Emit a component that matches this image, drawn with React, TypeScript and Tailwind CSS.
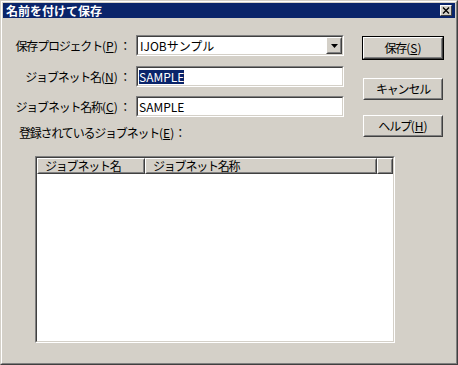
import React from 'react';

const sunkenOuter = 'border border-t-[#808080] border-l-[#808080] border-r-white border-b-white';
const sunkenInner = 'border border-t-[#404040] border-l-[#404040] border-r-[#d4d0c8] border-b-[#d4d0c8]';
const raisedOuter = 'border border-t-white border-l-white border-r-[#404040] border-b-[#404040]';
const raisedInner = 'border border-t-[#d4d0c8] border-l-[#d4d0c8] border-r-[#808080] border-b-[#808080]';

function Key({ k }: { k: string }) {
  return <span className="tracking-normal">(<span className="underline">{k}</span>)</span>;
}

function Field({ children }: { children: React.ReactNode }) {
  return (
    <div className={`w-[208px] h-[21px] ${sunkenOuter}`}>
      <div className={`h-full bg-white flex items-center pl-px tracking-normal ${sunkenInner}`}>{children}</div>
    </div>
  );
}

function Label({ text, keyChar }: { text: string; keyChar: string }) {
  return (
    <div className="w-[133px] pr-[6px] text-right whitespace-nowrap">
      {text}<Key k={keyChar} /> ：
    </div>
  );
}

function Button({ label, keyChar, isDefault = false, className = '' }: {
  label: string; keyChar?: string; isDefault?: boolean; className?: string;
}) {
  const body = (
    <div className={`h-full ${raisedOuter}`}>
      <div className={`h-full flex items-center justify-center ${raisedInner}`}>
        {label}
        {keyChar && <Key k={keyChar} />}
      </div>
    </div>
  );
  if (isDefault) {
    return <div className={`w-[82px] h-[24px] border border-black ${className}`}>{body}</div>;
  }
  return <div className={`w-[80px] h-[22px] ${className}`}>{body}</div>;
}

function HeaderCell({ children, className = '' }: { children?: React.ReactNode; className?: string }) {
  return (
    <div className={`h-full ${raisedOuter} ${className}`}>
      <div className={`h-full flex items-center pl-[6px] leading-[12px] whitespace-nowrap ${raisedInner}`}>{children}</div>
    </div>
  );
}

export default function App() {
  return (
    <div className="w-[458px] h-[365px] bg-[#d4d0c8] text-[12px] leading-[14px] tracking-[-1.2px] text-black font-['Noto_Sans_CJK_JP',sans-serif] border border-t-[#d4d0c8] border-l-[#d4d0c8] border-r-[#404040] border-b-[#404040]">
      <div className="h-full flex flex-col p-px border border-t-white border-l-white border-r-[#808080] border-b-[#808080]">
        {/* title bar */}
        <div className="h-[15px] bg-[#0a246a] flex items-center justify-between pl-[3px] pr-[3px]">
          <span className="text-white font-bold text-[12px] leading-[14px] tracking-normal">名前を付けて保存</span>
          <div className={`w-[12px] h-[11px] bg-[#d4d0c8] ${raisedOuter} flex items-center justify-center`}>
            <svg width="8" height="7" viewBox="0 0 8 7">
              <path d="M1 0.5 L7 6.5 M7 0.5 L1 6.5" stroke="black" strokeWidth="1.4" />
            </svg>
          </div>
        </div>

        {/* body */}
        <div className="flex-1 flex flex-col">
          <div className="flex">
            <div className="w-[359px] pt-[17px]">
              <div className="flex items-center h-[21px]">
                <Label text="保存プロジェクト" keyChar="P" />
                <div className={`w-[208px] h-[21px] ${sunkenOuter}`}>
                  <div className={`h-full bg-white flex items-center justify-between tracking-normal ${sunkenInner}`}>
                    <span className="pl-[2px]">IJOBサンプル</span>
                    <div className={`w-[16px] h-[17px] bg-[#d4d0c8] ${raisedOuter}`}>
                      <div className={`h-full flex items-center justify-center ${raisedInner}`}>
                        <svg width="7" height="4" viewBox="0 0 7 4">
                          <path d="M0 0 H7 L3.5 4 Z" fill="black" />
                        </svg>
                      </div>
                    </div>
                  </div>
                </div>
              </div>
              <div className="flex items-center h-[21px] mt-[10px]">
                <Label text="ジョブネット名" keyChar="N" />
                <Field>
                  <span className="bg-[#0a246a] text-white">SAMPLE</span>
                </Field>
              </div>
              <div className="flex items-center h-[21px] mt-[9px]">
                <Label text="ジョブネット名称" keyChar="C" />
                <Field>
                  <span>SAMPLE</span>
                </Field>
              </div>
              <div className="mt-[9px] pl-[16px] whitespace-nowrap">
                登録されているジョブネット<Key k="E" />：
              </div>
            </div>
            <div className="flex flex-col pt-[18px]">
              <Button label="保存" keyChar="S" isDefault />
              <Button label="キャンセル" className="ml-px mt-[18px]" />
              <Button label="ヘルプ" keyChar="H" className="ml-px mt-[15px]" />
            </div>
          </div>

          <div className={`ml-[32px] mt-[16px] w-[360px] h-[187px] ${sunkenOuter}`}>
            <div className={`h-full bg-white flex flex-col ${sunkenInner}`}>
              <div className="h-[16px] flex bg-[#d4d0c8]">
                <HeaderCell className="w-[108px]">ジョブネット名</HeaderCell>
                <HeaderCell className="w-[232px]">ジョブネット名称</HeaderCell>
                <HeaderCell className="flex-1" />
              </div>
            </div>
          </div>
        </div>
      </div>
    </div>
  );
}
